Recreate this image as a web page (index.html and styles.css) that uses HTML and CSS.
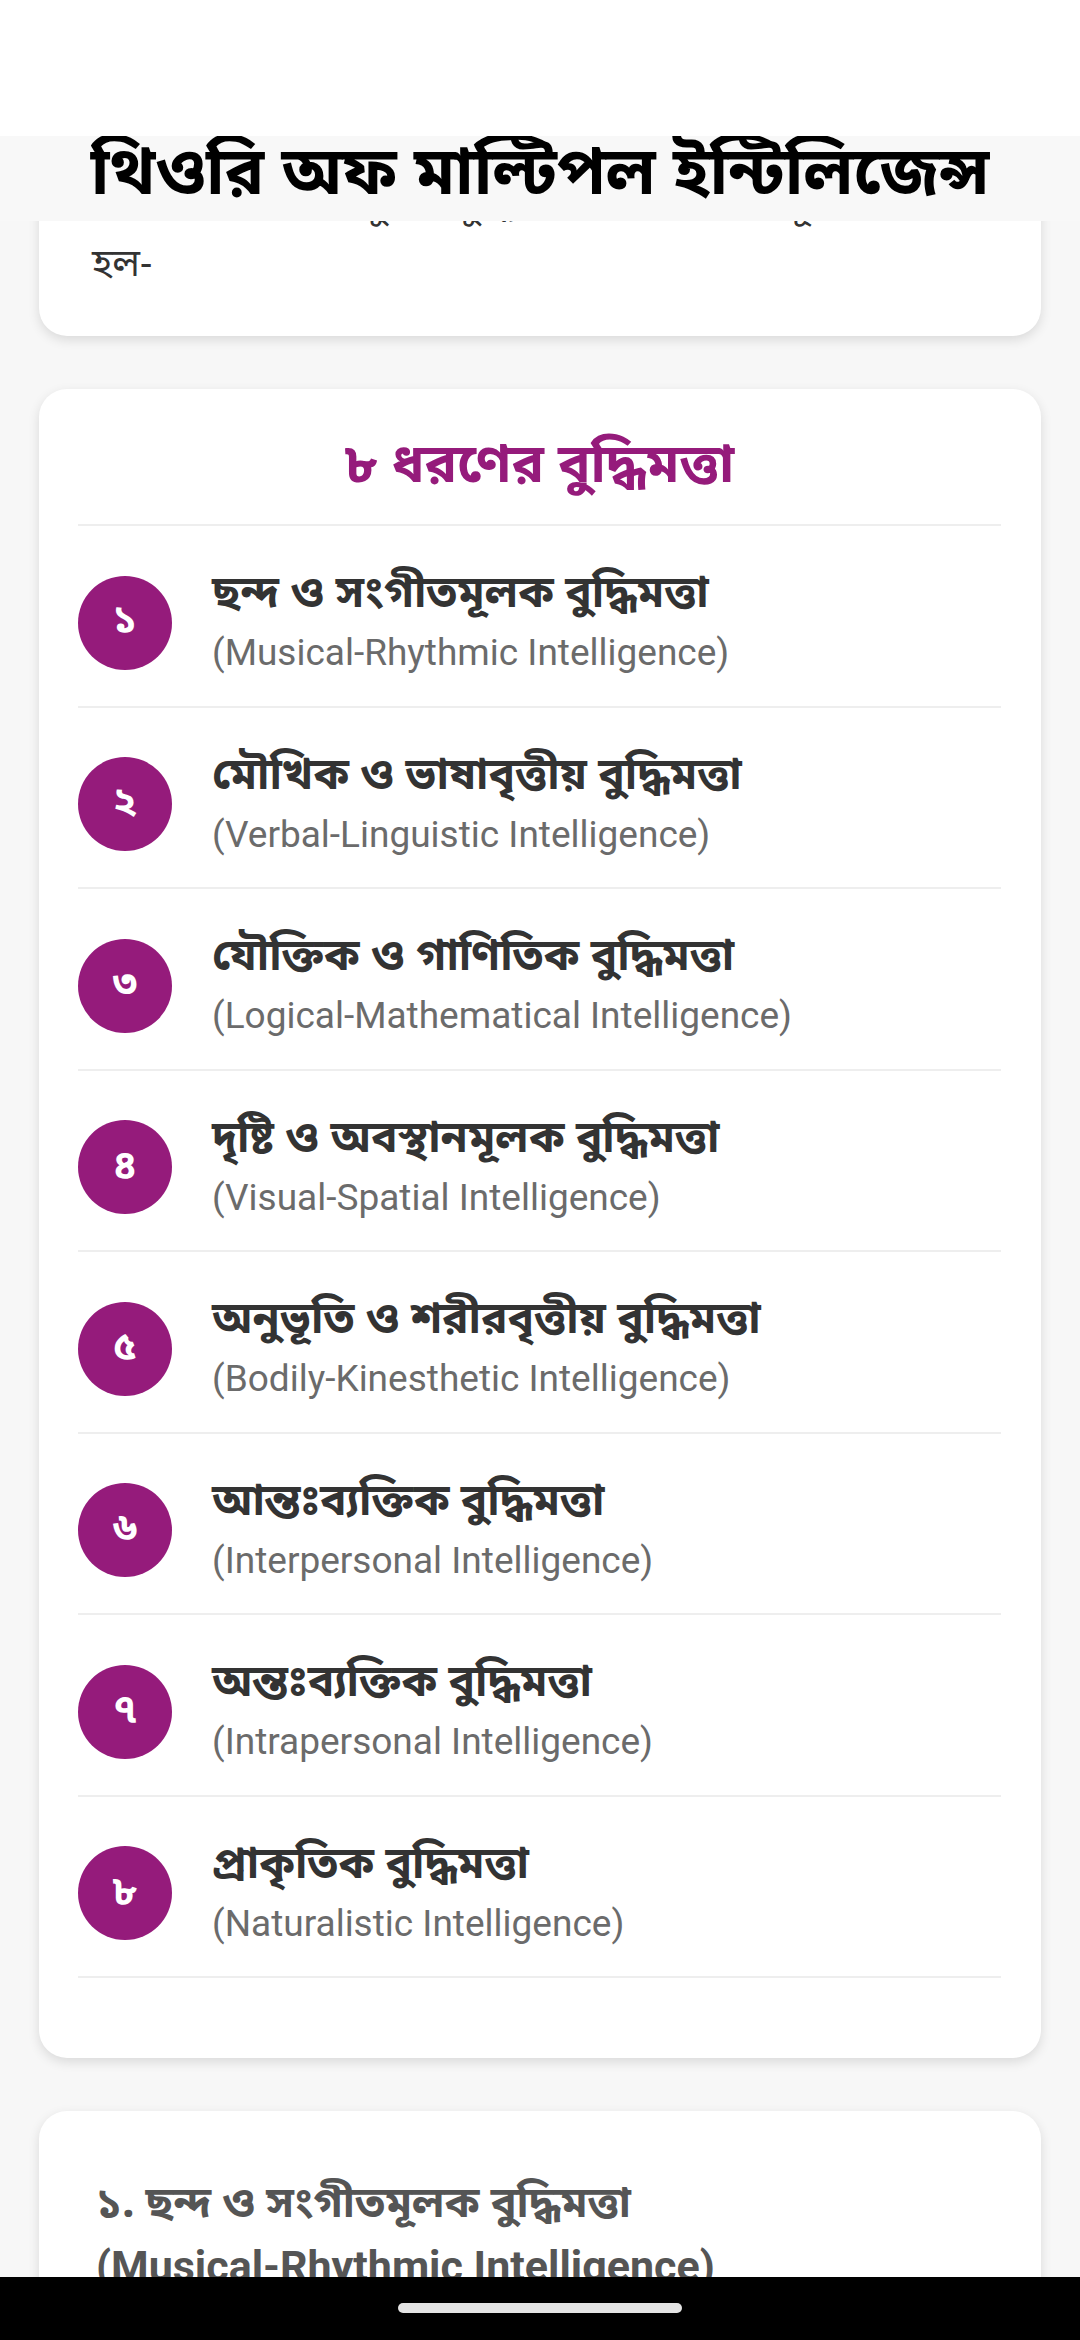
FILE: index.html
```html
<!DOCTYPE html>
<html lang="bn">
<head>
<meta charset="utf-8">
<title>থিওরি অফ মাল্টিপল ইন্টিলিজেন্স</title>
<link rel="stylesheet" href="styles.css">
</head>
<body>
<div class="phone">
  <div class="statusbar"></div>
  <header class="appbar">
    <h1 class="appbar-title">থিওরি অফ মাল্টিপল ইন্টিলিজেন্স</h1>
  </header>
  <main class="content">
    <section class="card card-intro">
      <p class="intro-text">গার্ডনারের মতে মানুষের বুদ্ধিমত্তা ৮ প্রকার যার সূচক গুলো</p>
      <p class="intro-text">হল-</p>
    </section>

    <section class="card card-list">
      <h2 class="list-title">৮ ধরণের বুদ্ধিমত্তা</h2>
      <ul class="list">
        <li class="row"><span class="badge">১</span><div class="row-text"><div class="row-bn">ছন্দ ও সংগীতমূলক বুদ্ধিমত্তা</div><div class="row-en">(Musical-Rhythmic Intelligence)</div></div></li>
        <li class="row"><span class="badge">২</span><div class="row-text"><div class="row-bn">মৌখিক ও ভাষাবৃত্তীয় বুদ্ধিমত্তা</div><div class="row-en">(Verbal-Linguistic Intelligence)</div></div></li>
        <li class="row"><span class="badge">৩</span><div class="row-text"><div class="row-bn">যৌক্তিক ও গাণিতিক বুদ্ধিমত্তা</div><div class="row-en">(Logical-Mathematical Intelligence)</div></div></li>
        <li class="row"><span class="badge">৪</span><div class="row-text"><div class="row-bn">দৃষ্টি ও অবস্থানমূলক বুদ্ধিমত্তা</div><div class="row-en">(Visual-Spatial Intelligence)</div></div></li>
        <li class="row"><span class="badge">৫</span><div class="row-text"><div class="row-bn">অনুভূতি ও শরীরবৃত্তীয় বুদ্ধিমত্তা</div><div class="row-en">(Bodily-Kinesthetic Intelligence)</div></div></li>
        <li class="row"><span class="badge">৬</span><div class="row-text"><div class="row-bn">আন্তঃব্যক্তিক বুদ্ধিমত্তা</div><div class="row-en">(Interpersonal Intelligence)</div></div></li>
        <li class="row"><span class="badge">৭</span><div class="row-text"><div class="row-bn">অন্তঃব্যক্তিক বুদ্ধিমত্তা</div><div class="row-en">(Intrapersonal Intelligence)</div></div></li>
        <li class="row"><span class="badge">৮</span><div class="row-text"><div class="row-bn">প্রাকৃতিক বুদ্ধিমত্তা</div><div class="row-en">(Naturalistic Intelligence)</div></div></li>
      </ul>
    </section>

    <section class="card card-detail">
      <h3 class="detail-title"><span class="detail-bn">১. ছন্দ ও সংগীতমূলক বুদ্ধিমত্তা</span><span class="detail-en">(Musical-Rhythmic Intelligence)</span></h3>
    </section>
  </main>
  <div class="navbar"><span class="home-pill"></span></div>
</div>
</body>
</html>
```

FILE: styles.css
```css
* { box-sizing: border-box; }

html, body {
  margin: 0;
  padding: 0;
}

body {
  background: #f7f7f7;
  font-family: "Noto Sans Bengali", "Noto Sans", Roboto, sans-serif;
  color: #333;
}

.phone {
  width: 1080px;
  height: 2340px;
  display: flex;
  flex-direction: column;
  overflow: hidden;
}

.statusbar {
  height: 136px;
  background: #ffffff;
  flex: none;
}

.appbar {
  height: 85px;
  flex: none;
  background: #f8f8f8;
  display: flex;
  align-items: center;
  justify-content: center;
  overflow: hidden;
  position: relative;
  z-index: 2;
}

.appbar-title {
  margin: 0;
  font-size: 66px;
  font-weight: 700;
  color: #000;
  line-height: 85px;
  white-space: nowrap;
  padding-bottom: 2px;
}

.content {
  flex: 1;
  overflow: hidden;
  padding: 0 39px;
  display: flex;
  flex-direction: column;
  gap: 53px;
}

.card {
  background: #fff;
  border-radius: 28px;
  box-shadow: 0 4px 12px rgba(0, 0, 0, 0.12);
  flex: none;
}

.card-intro {
  margin-top: -81px;
  padding: 40px 53px 40px;
}

.intro-text {
  margin: 0;
  font-size: 38px;
  line-height: 58px;
  color: #333;
  white-space: nowrap;
}

.card-list {
  padding: 0 40px 80px 39px;
}

.list-title {
  margin: 0;
  height: 137px;
  display: flex;
  align-items: center;
  justify-content: center;
  font-size: 54px;
  font-weight: 700;
  color: #951b7b;
  border-bottom: 2px solid #eeeeee;
  padding-top: 22px;
}

.list {
  list-style: none;
  margin: 0;
  padding: 0;
}

.row {
  height: 181.5px;
  border-bottom: 2px solid #eeeeee;
  display: flex;
  align-items: center;
  gap: 40px;
}

.badge {
  flex: none;
  width: 94px;
  height: 94px;
  border-radius: 50%;
  background: #951b7b;
  color: #fff;
  font-size: 40px;
  font-weight: 700;
  display: flex;
  align-items: center;
  justify-content: center;
  margin-top: 14px;
}

.row-text {
  display: flex;
  flex-direction: column;
  gap: 5px;
  padding-top: 12px;
}

.row-bn {
  font-size: 44px;
  font-weight: 700;
  color: #333;
  line-height: 58px;
}

.row-en {
  font-family: Roboto, "Noto Sans", sans-serif;
  font-size: 37px;
  color: #6b6b6b;
  line-height: 46px;
}

.card-detail {
  padding: 68px 40px 60px 57px;
}

.detail-title {
  margin: 0;
  font-weight: 700;
  color: #555;
  display: flex;
  flex-direction: column;
}

.detail-bn {
  font-family: "Noto Sans Bengali", Roboto, sans-serif;
  font-size: 43px;
  line-height: 56px;
}

.detail-en {
  font-family: Roboto, "Noto Sans", sans-serif;
  font-size: 43px;
  line-height: 62px;
}

.navbar {
  height: 63px;
  flex: none;
  background: #000;
  display: flex;
  justify-content: center;
  padding-top: 26px;
  position: relative;
  z-index: 2;
}

.home-pill {
  width: 284px;
  height: 10px;
  border-radius: 5px;
  background: #e4e4e4;
}
```
